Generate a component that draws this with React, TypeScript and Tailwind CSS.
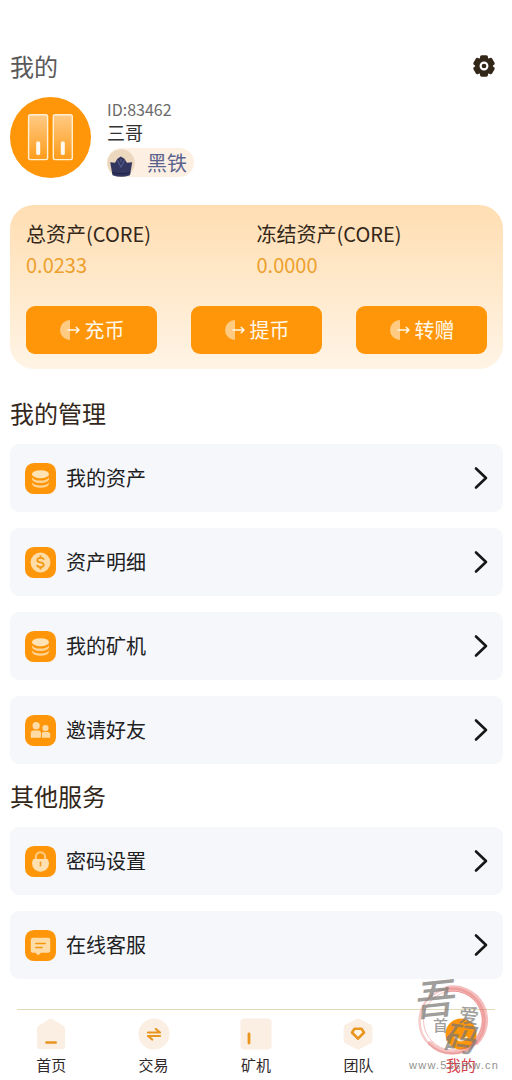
import React from 'react';

const ORANGE = '#ff960a';

const GearIcon = () => (
  <svg width="24" height="24" viewBox="0 0 24 24">
    <g fill="#33271a">
      <circle cx="12" cy="12" r="9" />
      <rect x="8" y="1.2" width="8" height="21.6" rx="1.8" />
      <rect x="8" y="1.2" width="8" height="21.6" rx="1.8" transform="rotate(60 12 12)" />
      <rect x="8" y="1.2" width="8" height="21.6" rx="1.8" transform="rotate(120 12 12)" />
    </g>
    <circle cx="12" cy="12" r="3.4" fill="#33271a" stroke="#fff" strokeWidth="2.1" />
  </svg>
);

const Avatar = () => (
  <svg width="81" height="81" viewBox="0 0 81 81" className="shrink-0">
    <defs>
      <linearGradient id="door" x1="0" y1="0" x2="0" y2="1">
        <stop offset="0" stopColor="#ffca85" />
        <stop offset="1" stopColor="#ff9c1a" />
      </linearGradient>
    </defs>
    <circle cx="40.5" cy="40.5" r="40.5" fill={ORANGE} />
    <g fill="url(#door)" stroke="#fff0d4" strokeWidth="1.4">
      <rect x="18.6" y="17.8" width="19" height="44.8" rx="1.8" />
      <rect x="43.3" y="17.8" width="19" height="44.8" rx="1.8" />
    </g>
    <g fill="#fffaf0">
      <rect x="26.2" y="44.5" width="4" height="13.5" rx="1.4" />
      <rect x="50.8" y="44.5" width="4" height="13.5" rx="1.4" />
    </g>
  </svg>
);

const RankIcon = () => (
  <svg width="28" height="28" viewBox="0 0 28 28">
    <circle cx="14" cy="14" r="13.8" fill="#ecd8be" />
    <path d="M3.2 13.2 8 13.8 10.4 9.8 13.8 7.4 17.4 9.8 20 13.8 25.2 13.2 23 26.2Q14 29.3 5.5 26.2Z" fill="#33375f" />
    <path d="M10.5 11.5 14 18 17.5 11.5M14 10v3" fill="none" stroke="#545b8c" strokeWidth="1.2" />
    <path d="M5.3 23.5Q14 26.2 23.2 23.5" fill="none" stroke="#1f2347" strokeWidth="1.2" />
  </svg>
);

const TransferIcon = () => (
  <svg width="22" height="22" viewBox="0 0 22 22">
    <path d="M11 1A10 10 0 0 0 11 21Z" fill="#ffcb82" />
    <path d="M9 11H20M17.2 8.2 20 11 17.2 13.8" fill="none" stroke="#fff8e8" strokeWidth="1.5" strokeLinecap="round" strokeLinejoin="round" />
  </svg>
);

const icons: Record<string, React.ReactNode> = {
  coins: (
    <>
      <ellipse cx="15" cy="10.8" rx="8.2" ry="3.9" fill="#ffe3b5" />
      <g fill="#ffd596">
        <path d="M6.8 14Q8.5 17 15 17T23.2 14V15.7Q22 19.4 15 19.4T6.8 15.7Z" />
        <path d="M6.8 18.9Q8.5 21.8 15 21.8T23.2 18.9V20.4Q22 24 15 24T6.8 20.4Z" />
      </g>
    </>
  ),
  dollar: (
    <>
      <circle cx="15" cy="15" r="9.6" fill="#ffdca6" />
      <path d="M18.4 12.2Q17.6 10.5 15 10.5C10.8 10.5 10.9 14.3 15 14.9C19.3 15.5 19.1 19.5 15 19.5Q12.2 19.5 11.4 17.6M15 8.3V10.5M15 19.5V21.7" fill="none" stroke="#f2960f" strokeWidth="1.7" />
    </>
  ),
  friends: (
    <g fill="#ffdca6">
      <circle cx="10.8" cy="10.3" r="3.5" />
      <circle cx="19.8" cy="12.7" r="3" />
      <path d="M5.6 22V17.6Q5.6 15 8.2 15H13Q15.4 15 15.4 17.6V22Z" />
      <path d="M16.4 22V17Q17 16.5 18 16.5H22Q24.4 16.5 24.4 19V22Z" />
    </g>
  ),
  lock: (
    <>
      <path d="M10.5 13.5V10.6a4.5 4.5 0 0 1 9 0V13.5" fill="none" stroke="#ffcd85" strokeWidth="2" />
      <path d="M8.3 12.7H21.7Q23.2 14.4 23.2 16.7A8.2 8.2 0 0 1 6.8 16.7Q6.8 14.4 8.3 12.7Z" fill="#ffe0b0" />
      <path d="M15 15.7V19" stroke="#ef9b27" strokeWidth="1.6" strokeLinecap="round" />
    </>
  ),
  chat: (
    <>
      <path d="M7.6 7.4H22.4Q24.4 7.4 24.4 9.4V20Q24.4 22 22.4 22H15.5L12.7 24.5 10.2 22H7.6Q5.6 22 5.6 20V9.4Q5.6 7.4 7.6 7.4Z" fill="#ffdca6" />
      <path d="M10.5 13H19.5M10.5 17H16.5" stroke="#f2960f" strokeWidth="1.5" strokeLinecap="round" />
    </>
  ),
};

const MenuRow = ({ icon, label }: { icon: string; label: string }) => (
  <div className="flex h-[68px] items-center rounded-[9px] bg-[#f5f7fa] pl-[15px] pr-[14px]">
    <svg width="31" height="31" viewBox="0 0 30 30">
      <rect width="30" height="30" rx="8.5" fill={ORANGE} />
      {icons[icon]}
    </svg>
    <span className="ml-[10px] flex-1 text-[20px] leading-7 text-[#20201f]">{label}</span>
    <svg width="16" height="24" viewBox="0 0 16 24">
      <path d="M3 2.5 13 12 3 21.5" fill="none" stroke="#171717" strokeWidth="2.6" strokeLinecap="round" strokeLinejoin="round" />
    </svg>
  </div>
);

const manageItems = [
  { icon: 'coins', label: '我的资产' },
  { icon: 'dollar', label: '资产明细' },
  { icon: 'coins', label: '我的矿机' },
  { icon: 'friends', label: '邀请好友' },
];

const serviceItems = [
  { icon: 'lock', label: '密码设置' },
  { icon: 'chat', label: '在线客服' },
];

const tabs = [
  {
    label: '首页',
    icon: (
      <>
        <path d="M14.2 1.2Q16 0 17.8 1.2L28.7 8Q30 9 30 10.5V29Q30 31 28 31H4Q2 31 2 29V10.5Q2 9 3.3 8Z" fill="#fbeee2" />
        <path d="M11.5 24.5H20.7" stroke="#e8961f" strokeWidth="2.6" strokeLinecap="round" />
      </>
    ),
  },
  {
    label: '交易',
    icon: (
      <>
        <circle cx="16" cy="16" r="15.5" fill="#fbeee2" />
        <path d="M10 14.5H22L17.8 11M22 18H10L14.2 21.5" fill="none" stroke="#e8961f" strokeWidth="2.2" strokeLinecap="round" strokeLinejoin="round" />
      </>
    ),
  },
  {
    label: '矿机',
    icon: (
      <>
        <rect x="0.5" y="0.5" width="31" height="31" rx="4" fill="#fbeee2" />
        <path d="M9 16V25" stroke="#e8961f" strokeWidth="2.8" strokeLinecap="round" />
      </>
    ),
  },
  {
    label: '团队',
    icon: (
      <>
        <path d="M14.2 1Q16 0 17.8 1L28.8 6.7Q30.4 7.6 30.4 9.5V22.5Q30.4 24.4 28.8 25.3L17.8 31Q16 32 14.2 31L3.2 25.3Q1.6 24.4 1.6 22.5V9.5Q1.6 7.6 3.2 6.7Z" fill="#fbeee2" />
        <path d="M12.5 10.8H19.5L22 14.5 16 20.7 10 14.5Z" fill="#fff6e8" stroke="#e8961f" strokeWidth="2.6" strokeLinejoin="round" />
      </>
    ),
  },
  {
    label: '我的',
    active: true,
    icon: (
      <>
        <circle cx="16" cy="16" r="15.5" fill={ORANGE} />
        <path d="M10.5 19.5Q16 25 21.5 19.5" fill="none" stroke="#ffe9c8" strokeWidth="2.4" strokeLinecap="round" />
      </>
    ),
  },
];

const Watermark = () => (
  <div className="pointer-events-none absolute left-[408px] top-[964px] h-[116px] w-[92px]">
    <svg width="92" height="100" viewBox="0 0 92 100" className="absolute left-0 top-0 overflow-visible">
      <g fill="none" stroke="#df5552">
        <circle cx="44" cy="57" r="32.5" strokeWidth="2.4" opacity="0.3" />
        <circle cx="45" cy="56.5" r="29.5" strokeWidth="1" opacity="0.35" />
        <path d="M38 25.5A31.5 31.5 0 0 1 67 79" strokeWidth="6.5" opacity="0.38" />
        <path d="M67 79A31.5 31.5 0 0 1 22 79" strokeWidth="4" opacity="0.35" strokeLinecap="round" />
      </g>
    </svg>
    <div className="font-['Noto_Sans_CJK_SC',sans-serif] font-medium text-[#777672] opacity-70">
      <span className="absolute left-[8px] top-[8px] -rotate-6 -skew-x-12 text-[41px] leading-[48px]">吾</span>
      <span className="absolute left-[25px] top-[51px] text-[15px] leading-5">首</span>
      <span className="absolute left-[51px] top-[39px] rotate-6 text-[20px] leading-6">爱</span>
      <span className="absolute left-[38px] top-[55px] rotate-[8deg] -skew-x-12 text-[33px] leading-9">码</span>
    </div>
    <span className="absolute left-[1px] top-[93px] whitespace-nowrap font-['Liberation_Sans',sans-serif] text-[11px] leading-4 tracking-[1.25px] text-[#777672] opacity-80">
      www.52smw.cn
    </span>
  </div>
);

export default function App() {
  return (
    <div className="relative flex h-[1080px] w-[512px] flex-col overflow-hidden bg-white font-['Noto_Sans_CJK_SC',sans-serif]">
      <header className="mt-12 flex h-9 items-center justify-between pl-[10px] pr-4">
        <h1 className="text-[24px] leading-9 text-[#595959]">我的</h1>
        <GearIcon />
      </header>

      <section className="mt-[13px] flex h-[81px] gap-4 pl-[10px]">
        <Avatar />
        <div className="flex flex-col items-start pt-[1px]">
          <p className="text-[16px] leading-[22px] text-[#6b6b6b]">ID:83462</p>
          <p className="text-[18px] leading-6 text-[#333333]">三哥</p>
          <div className="mt-1 flex h-[29px] w-[87px] items-center rounded-full bg-[#fdf0e2]">
            <RankIcon />
            <span className="ml-3 text-[20px] leading-7 text-[#5c638f]">黑铁</span>
          </div>
        </div>
      </section>

      <section className="mx-[10px] mr-[9px] mt-[27px] h-[164px] rounded-[24px] bg-linear-to-b from-[#ffdeb2] to-[#fff4e5] px-4 pt-[15px]">
        <div className="grid grid-cols-2">
          <div>
            <p className="text-[20px] leading-7 text-[#33271a]">总资产(CORE)</p>
            <p className="mt-[3px] text-[20px] leading-7 text-[#eda02d]">0.0233</p>
          </div>
          <div>
            <p className="text-[20px] leading-7 text-[#33271a]">冻结资产(CORE)</p>
            <p className="mt-[3px] text-[20px] leading-7 text-[#eda02d]">0.0000</p>
          </div>
        </div>
        <div className="mt-[27px] flex justify-between">
          {['充币', '提币', '转赠'].map((label) => (
            <button key={label} className="flex h-12 w-[131px] items-center justify-center gap-1 rounded-[9px] bg-[#ff960a] text-[20px] leading-7 text-[#fff8e8]">
              <TransferIcon />
              {label}
            </button>
          ))}
        </div>
      </section>

      <h2 className="mt-[26px] pl-[10px] text-[24px] leading-9 text-[#33271a]">我的管理</h2>
      <div className="ml-[10px] mr-[9px] mt-[13px] flex flex-col gap-4">
        {manageItems.map((item) => (
          <MenuRow key={item.label} icon={item.icon} label={item.label} />
        ))}
      </div>

      <h2 className="mt-[14px] pl-[10px] text-[24px] leading-9 text-[#33271a]">其他服务</h2>
      <div className="ml-[10px] mr-[9px] mt-[13px] flex flex-col gap-4">
        {serviceItems.map((item) => (
          <MenuRow key={item.label} icon={item.icon} label={item.label} />
        ))}
      </div>

      <div className="mx-[17px] mt-[30px] h-px shrink-0 bg-[#e2d9b8]" />
      <nav className="grid grid-cols-5 pt-[8px]">
        {tabs.map((tab) => (
          <div key={tab.label} className="flex flex-col items-center">
            <svg width="32" height="32" viewBox="0 0 32 32">
              {tab.icon}
            </svg>
            <span className={`mt-1 text-[15px] leading-[22px] ${tab.active ? 'text-[#d83d48]' : 'text-[#30272a]'}`}>{tab.label}</span>
          </div>
        ))}
      </nav>

      <Watermark />
    </div>
  );
}
